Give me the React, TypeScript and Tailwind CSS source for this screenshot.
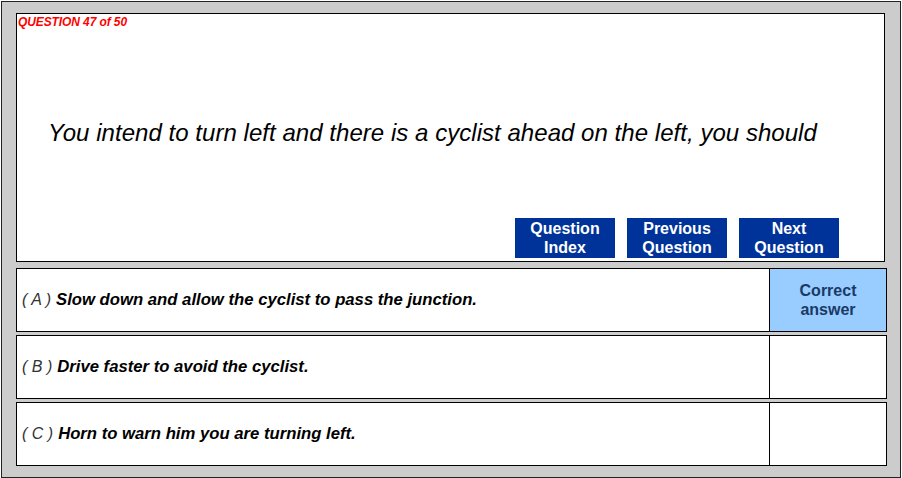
const answers = [
  { letter: "A", text: "Slow down and allow the cyclist to pass the junction.", correct: true },
  { letter: "B", text: "Drive faster to avoid the cyclist.", correct: false },
  { letter: "C", text: "Horn to warn him you are turning left.", correct: false },
];

function NavButton({ top, bottom }: { top: string; bottom: string }) {
  return (
    <button className="flex h-[40px] w-[100px] flex-col items-center justify-center bg-[#003399] text-[16px] font-bold leading-[19px] text-white">
      <span>{top}</span>
      <span>{bottom}</span>
    </button>
  );
}

export default function App() {
  return (
    <div className="h-[478px] w-[902px] bg-white pl-px pt-px font-['Liberation_Sans',Arial,sans-serif]">
      <div className="h-[477px] w-[900px] border border-[#222] bg-[#cccccc] pl-[14px] pt-[11px]">
        <div className="flex h-[249px] w-[869px] flex-col border border-black bg-white">
          <p className="pl-px pt-px text-[12px] font-bold italic leading-[14px] tracking-[-0.1px] text-[#ff0000]">
            QUESTION 47 of 50
          </p>
          <p className="mt-[90px] pl-[31px] text-[24px] italic leading-[28px] tracking-[0.04px] text-black">
            You intend to turn left and there is a cyclist ahead on the left, you should
          </p>
          <div className="mt-[71px] flex justify-end gap-[12px] pr-[45px]">
            <NavButton top="Question" bottom="Index" />
            <NavButton top="Previous" bottom="Question" />
            <NavButton top="Next" bottom="Question" />
          </div>
        </div>

        <div className="mt-[6px] flex flex-col gap-[3px]">
          {answers.map((a) => (
            <div key={a.letter} className="flex h-[64px] w-[871px] border border-black bg-white">
              <div className="flex flex-1 items-center pl-[5px] text-[16.7px] italic text-black">
                <span className="mr-[5px] text-[16px] font-normal text-[#333]">( {a.letter} )</span>
                <span className="font-bold">{a.text}</span>
              </div>
              <div
                className={
                  a.correct
                    ? "flex w-[117px] flex-col items-center justify-center border-l border-black bg-[#99ccff] text-[16px] font-bold leading-[19px] text-[#1a3a66]"
                    : "w-[117px] border-l border-black bg-white"
                }
              >
                {a.correct && (
                  <>
                    <span>Correct</span>
                    <span>answer</span>
                  </>
                )}
              </div>
            </div>
          ))}
        </div>
      </div>
    </div>
  );
}
